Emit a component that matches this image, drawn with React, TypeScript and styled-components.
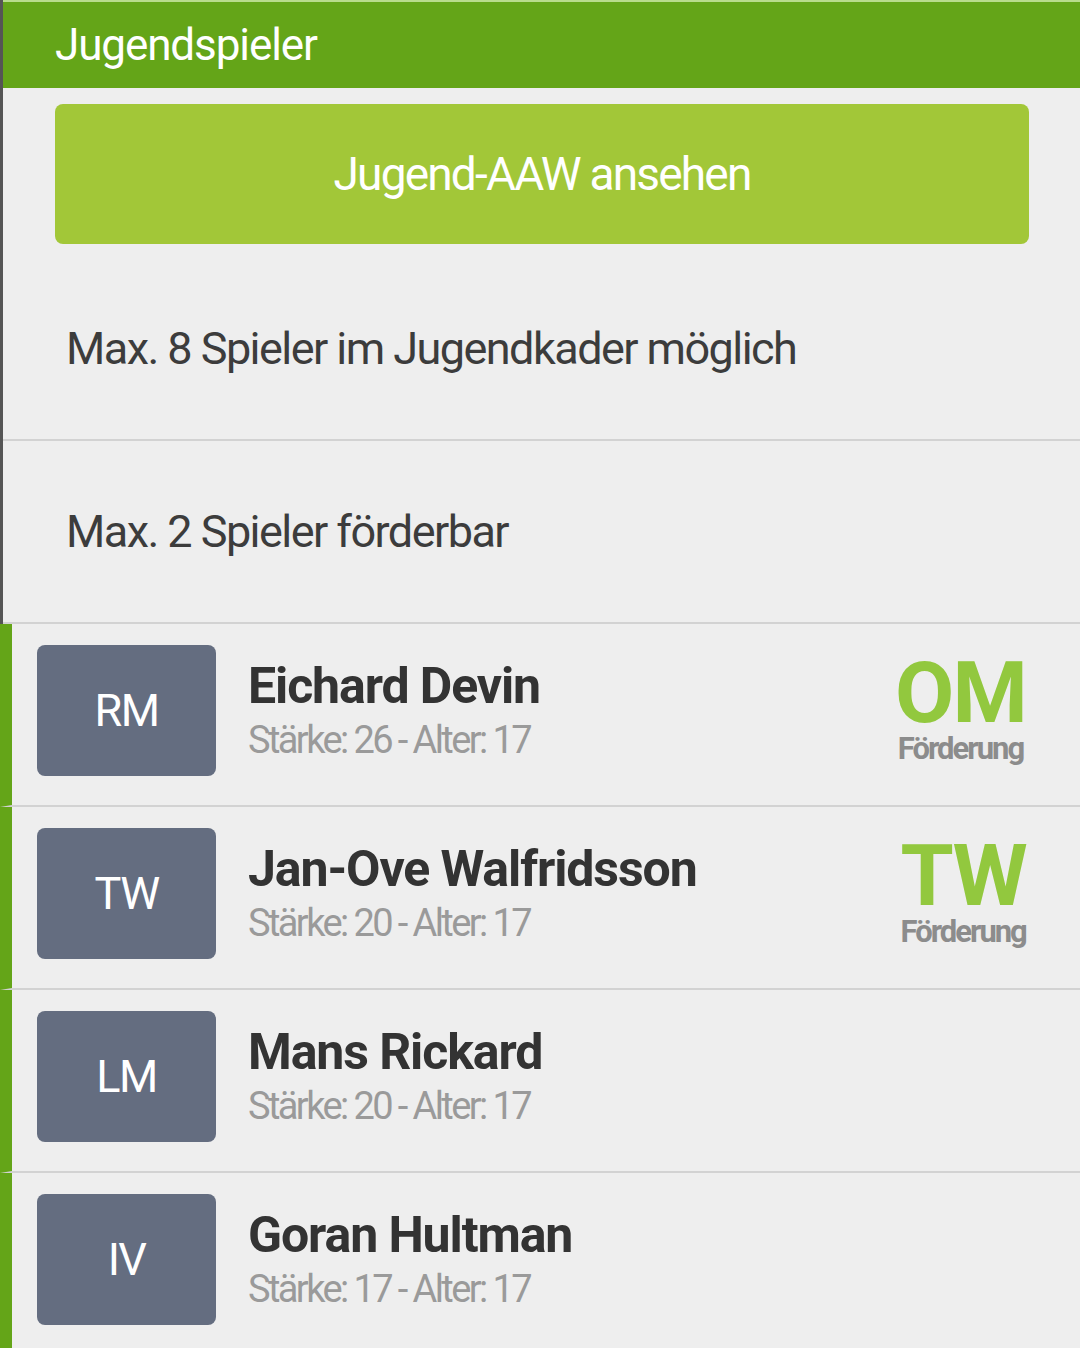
import React from 'react';
import styled, { createGlobalStyle } from 'styled-components';

const GlobalStyle = createGlobalStyle`
  html, body {
    margin: 0;
    padding: 0;
    background: #eeeeee;
  }
  body {
    font-family: Roboto, "Noto Sans", "Liberation Sans", sans-serif;
  }
`;

type Player = {
  pos: string;
  name: string;
  strength: number;
  age: number;
  promo?: string;
};

const players: Player[] = [
  { pos: 'RM', name: 'Eichard Devin', strength: 26, age: 17, promo: 'OM' },
  { pos: 'TW', name: 'Jan-Ove Walfridsson', strength: 20, age: 17, promo: 'TW' },
  { pos: 'LM', name: 'Mans Rickard', strength: 20, age: 17 },
  { pos: 'IV', name: 'Goran Hultman', strength: 17, age: 17 },
];

const Page = styled.div`
  width: 1080px;
  min-height: 1348px;
  background: #eeeeee;
  overflow: hidden;
`;

const Top = styled.div`
  border-left: 3px solid #555555;
`;

const Header = styled.header`
  height: 86px;
  border-top: 2px solid #b9dc8c;
  background: #64a518;
  display: flex;
  align-items: center;
  padding-left: 52px;
  color: #ffffff;
  font-size: 44px;
  letter-spacing: -1.1px;
`;

const ButtonWrap = styled.div`
  padding: 16px 51px 14px 52px;
`;

const ActionButton = styled.button`
  width: 100%;
  height: 140px;
  border: none;
  border-radius: 8px;
  background: #a2c738;
  color: #ffffff;
  font-family: inherit;
  font-size: 46px;
  letter-spacing: -1.8px;
  cursor: pointer;
`;

const InfoRow = styled.div`
  height: 181px;
  display: flex;
  align-items: center;
  padding-left: 63px;
  border-bottom: 2px solid #d2d2d2;
  color: #3c3c3c;
  font-size: 45px;
  letter-spacing: -1.55px;
`;

const PlayerRow = styled.div`
  height: 183px;
  box-sizing: border-box;
  display: flex;
  align-items: flex-start;
  padding: 21px 54px 0 25px;
  border-left: 12px solid #64a518;
  border-bottom: 2px solid #d2d2d2;
`;

const PosBadge = styled.div`
  width: 179px;
  height: 131px;
  flex-shrink: 0;
  border-radius: 8px;
  background: #646d80;
  color: #ffffff;
  display: flex;
  align-items: center;
  justify-content: center;
  font-size: 45px;
  letter-spacing: -1.6px;
`;

const Info = styled.div`
  flex: 1;
  padding-left: 32px;
  padding-top: 13px;
`;

const Name = styled.div`
  color: #333333;
  font-size: 50px;
  font-weight: 700;
  line-height: 56px;
  letter-spacing: -1.1px;
`;

const Stats = styled.div`
  margin-top: 2px;
  color: #9a9a9a;
  font-size: 38px;
  line-height: 48px;
  letter-spacing: -2.6px;
`;

const Promo = styled.div`
  display: flex;
  flex-direction: column;
  align-items: center;
  padding-top: 12px;
`;

const PromoPos = styled.div`
  color: #92c83e;
  font-size: 86px;
  font-weight: 700;
  line-height: 72px;
  letter-spacing: -1.8px;
`;

const PromoLabel = styled.div`
  margin-top: 2px;
  color: #8c8c8c;
  font-size: 31px;
  font-weight: 700;
  line-height: 36px;
  letter-spacing: -2px;
`;

export default function App() {
  return (
    <Page>
      <GlobalStyle />
      <Top>
        <Header>Jugendspieler</Header>
        <ButtonWrap>
          <ActionButton>Jugend-AAW ansehen</ActionButton>
        </ButtonWrap>
        <InfoRow>Max. 8 Spieler im Jugendkader möglich</InfoRow>
        <InfoRow>Max. 2 Spieler förderbar</InfoRow>
      </Top>
      {players.map((p) => (
        <PlayerRow key={p.name}>
          <PosBadge>{p.pos}</PosBadge>
          <Info>
            <Name>{p.name}</Name>
            <Stats>
              Stärke: {p.strength} - Alter: {p.age}
            </Stats>
          </Info>
          {p.promo && (
            <Promo>
              <PromoPos>{p.promo}</PromoPos>
              <PromoLabel>Förderung</PromoLabel>
            </Promo>
          )}
        </PlayerRow>
      ))}
    </Page>
  );
}
